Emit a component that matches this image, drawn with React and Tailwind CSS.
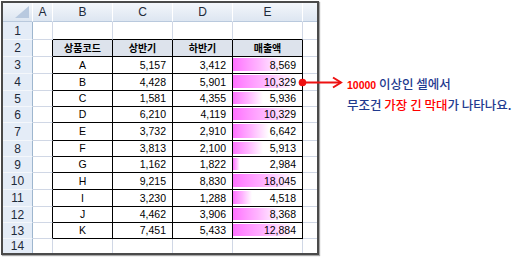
import React from "react";

const FONT = { fontFamily: '"Liberation Sans", "Noto Sans CJK KR", sans-serif' };
const KFONT = { fontFamily: '"Noto Sans CJK KR", "Liberation Sans", sans-serif' };

const colW = ["w-[30px]", "w-[20px]", "w-[60px]", "w-[60px]", "w-[60px]", "w-[70px]", "w-[14px]"];
const colLetters = ["", "A", "B", "C", "D", "E", ""];
const rowH = [
  "h-[18px]", "h-[17px]", "h-[17px]", "h-[17px]", "h-[16px]", "h-[16px]", "h-[18px]",
  "h-[16px]", "h-[16px]", "h-[17px]", "h-[17px]", "h-[16px]", "h-[16px]", "h-[14px]",
];

const data = [
  ["A", 5157, 3412, 8569],
  ["B", 4428, 5901, 10329],
  ["C", 1581, 4355, 5936],
  ["D", 6210, 4119, 10329],
  ["E", 3732, 2910, 6642],
  ["F", 3813, 2100, 5913],
  ["G", 1162, 1822, 2984],
  ["H", 9215, 8830, 18045],
  ["I", 3230, 1288, 4518],
  ["J", 4462, 3906, 8368],
  ["K", 7451, 5433, 12884],
];
const headers = ["상품코드", "상반기", "하반기", "매출액"];
const fmt = (n) => n.toLocaleString("en-US");

function barPct(v) {
  const f = Math.max(0, Math.min(1, (v - 2984) / (10000 - 2984)));
  return 10 + 80 * f;
}

function Cell({ r, c, children, align = "center", bar }) {
  const inTableCol = c >= 2 && c <= 5;
  const rightBlack = r >= 2 && r <= 13 && c >= 1 && c <= 5;
  const bottomBlack = inTableCol && r >= 1 && r <= 13;
  const lastCol = c === 6;
  const lastRow = r === 14;
  const rb = lastCol ? "" : rightBlack ? "border-r border-r-black" : "border-r border-r-[#d0d7e5]";
  const bb = lastRow ? "" : bottomBlack ? "border-b border-b-black" : "border-b border-b-[#d0d7e5]";
  const isHead = r === 2 && inTableCol;
  const al = align === "right" ? "justify-end pr-[6px]" : "justify-center";
  return (
    <div
      className={`${colW[c]} h-full ${rb} ${bb} relative flex items-center ${al} ${isHead ? "bg-[#dde3ec] font-bold text-[10px]" : "bg-white text-[10.5px]"} text-black`}
    >
      {bar != null && (
        <div
          className="absolute left-0 top-[1px] bottom-[2px] bg-linear-to-r from-[#ff70ff] via-[#ffb4ff] to-white"
          style={{ width: `${bar}%` }}
        />
      )}
      <span className="relative leading-none">{children}</span>
    </div>
  );
}

function Row({ r }) {
  const cells = [];
  for (let c = 1; c <= 6; c++) {
    let content = null;
    let align = "center";
    let bar = null;
    if (r === 2 && c >= 2 && c <= 5) {
      content = <span style={KFONT}>{headers[c - 2]}</span>;
    } else if (r >= 3 && r <= 13 && c >= 2 && c <= 5) {
      const d = data[r - 3];
      if (c === 2) content = d[0];
      else {
        content = fmt(d[c - 2]);
        align = "right";
        if (c === 5) bar = barPct(d[3]);
      }
    }
    cells.push(
      <Cell key={c} r={r} c={c} align={align} bar={bar}>
        {content}
      </Cell>
    );
  }
  return (
    <div className={`flex ${rowH[r - 1]}`}>
      <div
        className={`${colW[0]} h-full bg-[#e4ecf7] border-r border-r-[#9eb6ce] ${r === 14 ? "" : "border-b border-b-[#f4f7fb]"} flex items-center justify-center text-[12px] text-[#1e2a3a]`}
      >
        {r}
      </div>
      {cells}
    </div>
  );
}

export default function App() {
  return (
    <div className="w-[518px] h-[260px] bg-white relative overflow-hidden flex items-start" style={FONT}>
      <div className="mt-[1px] ml-[1px] w-[318px] h-[254px] border-2 border-[#4a4a4a] shadow-[1px_1px_1px_rgba(0,0,0,0.35)] shrink-0 flex flex-col">
        <div className="flex h-[19px]">
          {colLetters.map((l, i) => (
            <div
              key={i}
              className={`${colW[i]} h-full bg-linear-to-b from-[#f3f6fb] to-[#dde6f1] ${i === 6 ? "" : "border-r border-r-[#ffffff]"} border-b border-b-[#b9c9dd] relative flex items-center justify-center text-[12px] text-[#1e2a3a]`}
            >
              {i === 0 && (
                <svg className="absolute left-0 top-0" width="29" height="18" viewBox="0 0 29 18">
                  <polygon points="26,3 26,15 12,15" fill="#b8c9df" />
                </svg>
              )}
              {l}
            </div>
          ))}
        </div>
        {Array.from({ length: 14 }, (_, i) => (
          <Row key={i} r={i + 1} />
        ))}
      </div>

      <div className="ml-[28px] pt-[74px] leading-[19px] text-[12.5px] font-medium text-[#1f3a8f] whitespace-nowrap" style={KFONT}>
        <div>
          <span className="text-[#ff0000] font-bold text-[10.5px]" style={FONT}>10000</span> 이상인 셀에서
        </div>
        <div>
          무조건 <span className="text-[#ff0000]">가장 긴 막대</span>가 나타나요.
        </div>
      </div>

      <svg className="absolute left-[296px] top-[74px]" width="50" height="17" viewBox="0 0 50 17">
        <line x1="6.5" y1="8.5" x2="45" y2="8.5" stroke="#ee1111" strokeWidth="2" />
        <polyline points="37,3.5 45,8.5 37,13.5" fill="none" stroke="#ee1111" strokeWidth="2" />
        <circle cx="6.5" cy="8.5" r="3.8" fill="#ee1111" />
      </svg>
    </div>
  );
}
